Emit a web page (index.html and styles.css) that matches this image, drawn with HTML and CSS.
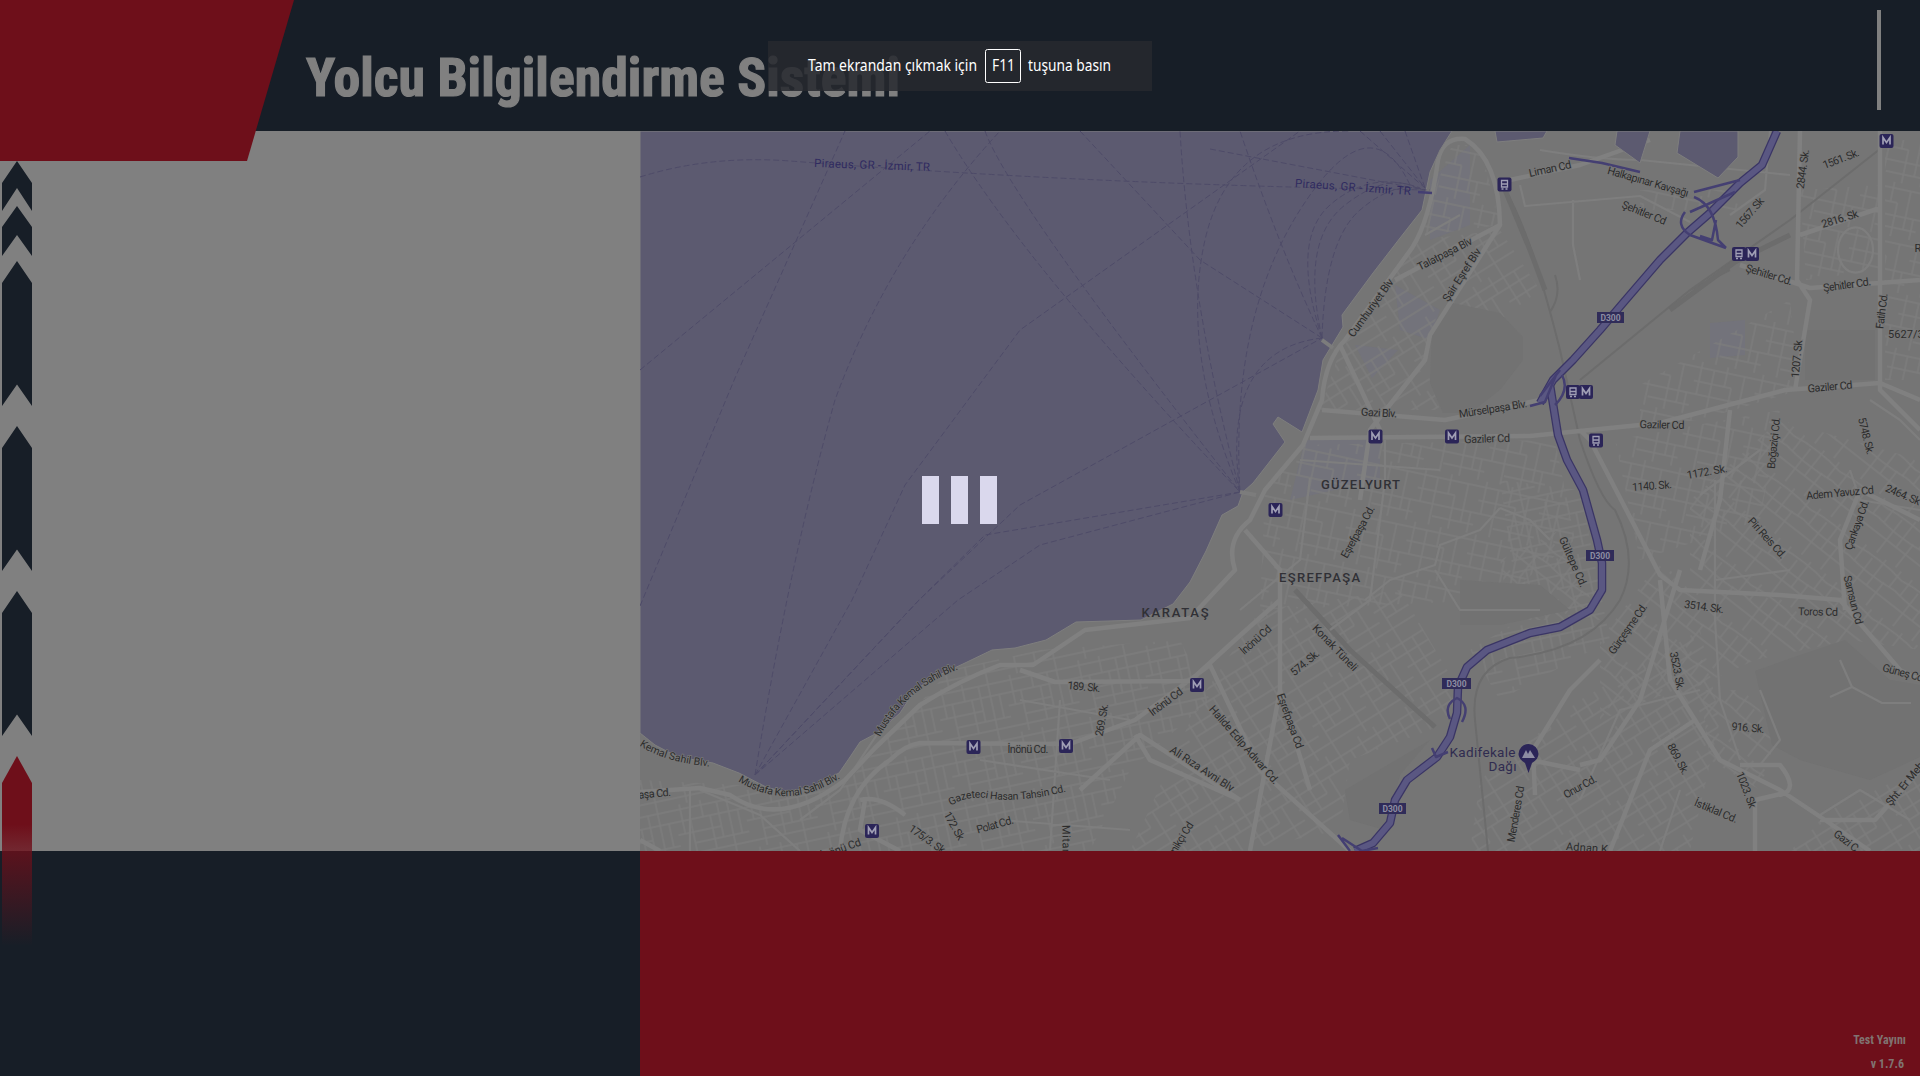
FILE: index.html
```
<!DOCTYPE html>
<html lang="tr">
<head>
<meta charset="utf-8">
<title>Yolcu Bilgilendirme Sistemi</title>
<link rel="stylesheet" href="styles.css">
</head>
<body>
<div class="screen">
  <header class="header">
    <div class="brand"></div>
    <h1 class="title"><svg width="600" height="70"><text x="1" y="53" textLength="594" lengthAdjust="spacingAndGlyphs">Yolcu Bilgilendirme Sistemi</text></svg></h1>
    <div class="divider"></div>
  </header>
  <main class="content">
    <section class="stops"></section>
    <section class="map">
      <svg viewBox="640 131 1280 720" width="1280" height="720">
        <defs>
          <pattern id="g1" width="62" height="54" patternUnits="userSpaceOnUse" patternTransform="rotate(12)"><path d="M0 6H62M0 20H38M0 33H62M20 45H62M5 0V33M18 6V54M31 0V20M38 20V54M49 6V45M57 33V54"/></pattern>
          <pattern id="g2" width="56" height="64" patternUnits="userSpaceOnUse" patternTransform="rotate(-32)"><path d="M0 8H56M0 19H56M0 32H33M8 43H56M0 55H56M8 0V64M20 8V43M33 0V32M43 19V64M51 0V19"/></pattern>
          <pattern id="g3" width="70" height="58" patternUnits="userSpaceOnUse" patternTransform="rotate(-12)"><path d="M0 5H70M0 17H70M0 30H44M15 41H70M0 51H70M7 0V30M15 17V58M28 0V17M35 17V51M44 5V41M54 0V58M63 17V41"/></pattern>
          <pattern id="g4" width="58" height="48" patternUnits="userSpaceOnUse" patternTransform="rotate(38)"><path d="M0 7Q28 2 58 7M0 19Q28 23 58 19M0 32H58M8 0V19M21 7V48M33 0V32M45 19V48M52 0V19"/></pattern>
          <path id="coastA" d="M630 738Q655 762 714 767"/>
          <path id="coastB" d="M738 781Q788 813 842 777"/>
          <path id="coastC" d="M880 737Q905 688 962 668"/>
          <path id="gaz" d="M951 806Q965 796 985 798Q1020 804 1072 790"/>
          <g id="metro"><rect x="-7" y="-7" width="14" height="14" rx="2"/><path d="M-3.5 3.5V-3.5L0 1.5L3.5-3.5V3.5"/></g>
          <g id="train"><rect x="-7" y="-7" width="14" height="14" rx="2"/><path d="M-3-4H3V2.500H-3ZM-3-.5H3M-3 4.500H-1M1 4.500H3"/></g>
        </defs>
        <rect class="land" x="640" y="131" width="1280" height="720"/>
        <g class="tint">
          <path d="M1430 180L1470 145V225L1430 240ZM1395 285L1440 310L1430 340L1400 330ZM1355 345L1398 350L1372 378ZM1305 440L1380 440V480L1290 500ZM1710 323L1745 320V355L1710 358Z"/>
        </g>
        <g class="grid">
          <path fill="url(#g1)" d="M1452 145L1480 145L1500 225L1425 235L1425 215ZM1640 190H1740V210H1640ZM1800 190L1880 185V270L1806 280ZM1885 140H1920V380H1885ZM1640 385L1790 300L1800 390L1700 420L1640 425ZM1300 445L1555 440L1575 540L1500 600L1260 610L1265 490ZM1615 440L1780 410L1760 520L1640 560Z"/>
          <path fill="url(#g2)" d="M1340 350L1420 240L1500 230L1540 290L1500 320L1440 300L1425 365L1440 410L1320 410ZM1260 610L1400 590L1465 700L1430 730L1350 760L1340 830L1240 851H1130L1200 700ZM1580 700L1700 630L1720 720L1690 851H1470L1480 780ZM1790 851L1830 810L1920 770V851Z"/>
          <path fill="url(#g3)" d="M950 670L1040 650L1180 640L1210 700L1130 770L1090 851H860L840 790L890 735ZM640 780L740 785L860 790L900 851H640ZM1500 480L1580 490L1610 640L1500 700L1470 650L1520 620Z"/>
          <path fill="url(#g4)" d="M1690 500L1780 420L1920 460V650L1850 640L1755 660L1690 690ZM1700 690H1750L1775 740L1760 790L1710 760ZM1600 640L1660 560L1700 600L1700 680L1600 720ZM1500 560L1560 530L1600 620L1510 620Z"/>
        </g>
        <g class="park">
          <path d="M1453 303L1500 313L1523 337V360L1500 390L1470 413H1443L1430 383L1432 330ZM1755 671L1800 655L1845 640L1890 680L1920 685V757L1870 780L1800 760L1772 745ZM1345 790L1430 740L1400 775L1385 830L1350 820ZM1460 580L1540 585L1570 610L1500 625L1460 625ZM1805 330H1875V380H1805Z"/>
        </g>
        <g class="rail"><path d="M1505 190Q1530 230 1560 350L1580 440Q1600 500 1615 510Q1640 560 1620 600Q1590 650 1510 658Q1470 670 1475 720L1488 851M1580 380L1690 290L1790 220L1885 145M1690 290L1730 270M1555 275Q1562 295 1550 312"/><path class="wide" d="M1505 190L1530 250L1545 290M1670 310L1735 262L1790 235M1295 590L1350 650L1435 727"/></g>
        <g class="street">
          <path d="M1425 235L1460 215M1540 150Q1600 160 1640 160L1790 175M1770 131L1765 190L1730 215M1520 185L1525 206L1640 196L1690 222M1573 200V245L1580 280M1310 478L1300 560L1240 610M1385 440V480L1370 600L1330 630M1500 508L1480 530L1440 545L1435 565L1390 580L1365 600M1500 508L1530 520L1550 540M1435 570L1460 610L1540 610M1700 495L1760 450M1580 800L1620 710L1700 690M1660 851L1680 790M1715 480V620L1720 700L1740 760M1715 580L1790 570M1840 660L1852 687L1830 697M1852 687L1882 703L1911 703M1760 690L1780 740L1760 765M1870 400L1900 420L1920 440M1850 470L1860 500L1920 510M1910 820L1860 790L1820 815M1300 460L1440 470M800 820L840 790L880 730M700 790L760 815L800 851M690 790V851M1000 820L1130 830M1020 700L1130 720M980 760L1110 780M1050 850L1060 700M1838 250A17 22 0 1 0 1873 250A17 22 0 1 0 1838 250"/>
        </g>
        <g class="road">
          <path d="M1500 225Q1499 160 1465 139Q1443 137 1438 160Q1430 220 1412 248L1345 340Q1325 360 1322 400L1303 445L1265 490L1250 520Q1225 540 1235 570L1190 618L1085 630L1033 665L1000 665Q960 680 920 705L875 748L845 780Q780 830 730 795L700 788L640 792"/>
          <path d="M1020 670L1055 682L1190 681L1235 640L1280 600M840 851Q845 790 890 760Q905 745 920 743L1070 744L1135 720L1210 665M1395 280L1500 225L1430 335L1425 360L1370 430L1360 500M1322 410L1445 420L1540 400M1310 438L1530 436L1660 423L1785 390L1880 383L1920 400M1340 345L1380 430M1245 530L1280 570V600L1280 690L1250 851M1280 690L1310 790M1210 665L1260 770L1350 851M1240 800L1140 735L1080 790M1135 735L1150 760L1240 800M1800 131L1797 280L1810 300L1795 390M1740 265L1810 288L1920 280M1880 131V390L1920 430M1800 235L1880 208M1580 430L1590 440L1660 575L1680 590L1780 595L1840 600L1900 670L1920 680M1580 765L1600 760L1640 700L1680 570M1660 580L1670 680L1695 720L1720 760L1780 790L1825 820L1870 851M1695 720L1650 750L1610 851M1740 765H1780Q1800 790 1780 795M1755 851V800L1785 793M1820 820L1875 820L1920 770M1700 570L1720 500L1730 410M1845 610L1840 540L1860 490L1880 500L1920 520M1510 180L1580 165L1650 140M1535 795L1533 750L1570 690L1600 660M640 840L660 851M860 800Q880 795 905 815M900 851L860 830L865 800M1530 760L1580 770"/>
        </g>
        <path class="sea" d="M640 131H1452L1440 150L1430 172L1422 210L1400 238L1373 273L1342 315L1343 327L1323 360L1318 390L1302 432L1278 417L1273 424L1285 442L1253 483L1243 492L1238 506L1222 515L1206 551L1190 582L1173 604L1141 620L1076 622L1046 640L1015 648L992 650L965 663L935 677L915 690L900 713L877 733L860 742L850 757L839 773L812 787L785 792L766 787L739 773L713 763L678 757L655 745L640 733ZM1495 131H1547L1543 138L1497 142ZM1617 131H1650L1640 163L1615 145ZM1680 131H1738V157L1718 178L1677 153Z"/>
        <g class="ferry">
          <path d="M640 177Q710 155 790 161Q1100 185 1430 190M640 606L735 378L845 131M755 775Q790 560 835 400Q890 250 1000 131M755 775L852 600L905 485L1020 330L1300 131M755 775L919 600L985 535L1240 492M755 775L919 600L1020 505L1322 338M755 775L958 600L1040 545L1240 492M640 370L930 131M945 131Q1020 260 1240 492M985 131Q1010 200 1240 492M1240 492Q1180 350 1205 240T1350 131M1240 492Q1190 300 1180 131M1240 492Q1230 320 1300 210T1410 185M1080 131L1200 260L1322 338M1322 338Q1290 240 1330 205T1420 188M1322 338Q1300 240 1345 205T1420 190M1322 338Q1325 240 1360 210T1425 190M1322 338Q1280 250 1240 131M1322 338Q1220 350 1240 492M1210 149L1425 190M1360 131L1425 188M1380 131L1425 188M1405 131L1425 188"/>
        </g>
        <path class="pier" d="M1322 340L1333 348M1240 492L1256 495"/>
        <g class="hw-edge"><path d="M1777 131L1762 165L1740 183L1710 213L1687 233L1660 260L1623 303L1600 330L1573 360L1553 380L1540 403M1550 385L1558 435L1567 460L1583 490L1597 540L1602 563V590L1590 610L1560 627L1530 633L1487 650L1467 667L1458 687L1457 713L1450 737L1437 757L1407 780L1395 800L1390 823L1373 843L1355 851"/></g>
        <g class="hw"><path d="M1777 131L1762 165L1740 183L1710 213L1687 233L1660 260L1623 303L1600 330L1573 360L1553 380L1540 403M1550 385L1558 435L1567 460L1583 490L1597 540L1602 563V590L1590 610L1560 627L1530 633L1487 650L1467 667L1458 687L1457 713L1450 737L1437 757L1407 780L1395 800L1390 823L1373 843L1355 851"/></g>
        <g class="ramp"><path d="M1569 158L1602 163L1640 172M1694 192L1740 180M1694 197Q1715 205 1718 240L1726 248M1690 212L1735 192M1685 212Q1675 225 1690 235L1726 248M1700 236L1712 240L1716 220M1530 406L1545 402L1556 375M1540 396L1560 370M1555 405Q1570 390 1562 375M1450 719Q1443 705 1457 698Q1471 705 1462 722M1432 748L1436 757L1448 752M1338 835L1350 851M1342 838L1362 851L1378 848M1418 192L1432 193"/></g>
        <g class="shield">
          <rect x="1597" y="312" width="27" height="11"/><rect x="1586" y="550" width="28" height="11"/><rect x="1442" y="678" width="29" height="11"/><rect x="1379" y="803" width="27" height="11"/>
          <text x="1610.500" y="321">D300</text><text x="1600" y="559">D300</text><text x="1456.500" y="687">D300</text><text x="1392.500" y="812">D300</text>
        </g>
        <g class="pin">
          <use href="#train" x="1504.500" y="184.500"/><use href="#metro" x="1375.500" y="436.500"/><use href="#metro" x="1452" y="436.500"/><use href="#train" x="1573" y="392"/><use href="#metro" x="1586" y="392"/><use href="#train" x="1596" y="440.500"/><use href="#train" x="1739" y="254"/><use href="#metro" x="1752" y="254"/><use href="#metro" x="1886.500" y="141"/><use href="#metro" x="1275.500" y="510"/><use href="#metro" x="1197" y="685"/><use href="#metro" x="973.500" y="747"/><use href="#metro" x="1066" y="746"/><use href="#metro" x="872" y="831"/>
          <path class="drop" d="M1528.500 773L1525 763Q1518.500 759 1518.500 754A10 10 0 0 1 1538.500 754Q1538.500 759 1532 763Z"/><path class="peak" d="M1522 758L1526 750L1528 754L1530 750L1535 758Z"/>
        </g>
        <g class="place">
          <text x="1321" y="488.500" textLength="79">GÜZELYURT</text><text x="1279" y="582" textLength="81">EŞREFPAŞA</text><text x="1141.500" y="617" textLength="67">KARATAŞ</text>
          <text class="poi" x="1449.500" y="757" textLength="66">Kadifekale</text><text class="poi" x="1488.500" y="770.500" textLength="28">Dağı</text>
        </g>
        <g class="sealabel"><text transform="translate(872 165) rotate(2)" textLength="116">Piraeus, GR - İzmir, TR</text><text transform="translate(1353 187) rotate(4)" textLength="116">Piraeus, GR - İzmir, TR</text></g>
        <g class="label">
          <text transform="translate(1550 169) rotate(-12)" textLength="43">Liman Cd</text>
          <text transform="translate(1648 182) rotate(16)" textLength="84">Halkapınar Kavşağı</text>
          <text transform="translate(1644 213) rotate(22)" textLength="47">Şehitler Cd</text>
          <text transform="translate(1445 254) rotate(-27)" textLength="60">Talatpaşa Blv</text>
          <text transform="translate(1462 275) rotate(-57)" textLength="61">Şair Eşref Blv</text>
          <text transform="translate(1371 308) rotate(-54)" textLength="69">Cumhuriyet Blv</text>
          <text transform="translate(1379 413) rotate(3)" textLength="36">Gazi Blv.</text>
          <text transform="translate(1493 409) rotate(-9)" textLength="69">Mürselpaşa Blv.</text>
          <text transform="translate(1487 439) rotate(-2)" textLength="46">Gaziler Cd</text>
          <text transform="translate(1841 159) rotate(-21)" textLength="38">1561. Sk.</text>
          <text transform="translate(1803 169) rotate(-82)" textLength="40">2844. Sk.</text>
          <text transform="translate(1750 213) rotate(-49)" textLength="37">1567. Sk</text>
          <text transform="translate(1840 219) rotate(-17)" textLength="38">2816. Sk</text>
          <text transform="translate(1769 275) rotate(17)" textLength="48">Şehitler Cd.</text>
          <text transform="translate(1847 285) rotate(-8)" textLength="48">Şehitler Cd.</text>
          <text transform="translate(1882 311) rotate(-83)" textLength="36">Fatih Cd.</text>
          <text transform="translate(1909 334)" textLength="42">5627/35</text>
          <text transform="translate(1918 248)">R</text>
          <text transform="translate(1797 359) rotate(-85)" textLength="38">1207. Sk</text>
          <text transform="translate(1830 387) rotate(-5)" textLength="45">Gaziler Cd</text>
          <text transform="translate(1662 425) rotate(1)" textLength="45">Gaziler Cd</text>
          <text transform="translate(1774 443) rotate(-84)" textLength="52">Boğaziçi Cd.</text>
          <text transform="translate(1866 436) rotate(76)" textLength="38">5748. Sk.</text>
          <text transform="translate(1707 472) rotate(-10)" textLength="41">1172. Sk.</text>
          <text transform="translate(1652 486) rotate(-4)" textLength="40">1140. Sk.</text>
          <text transform="translate(1840 493) rotate(-5)" textLength="68">Adem Yavuz Cd</text>
          <text transform="translate(1903 495) rotate(23)" textLength="37">2464. Sk</text>
          <text transform="translate(1857 525) rotate(-70)" textLength="52">Çankaya Cd.</text>
          <text transform="translate(1767 538) rotate(48)" textLength="51">Piri Reis Cd.</text>
          <text transform="translate(1853 600) rotate(76)" textLength="50">Samsun Cd</text>
          <text transform="translate(1818 612) rotate(1)" textLength="40">Toros Cd</text>
          <text transform="translate(1704 607) rotate(8)" textLength="40">3514. Sk.</text>
          <text transform="translate(1628 629) rotate(-55)" textLength="59">Gürçeşme Cd.</text>
          <text transform="translate(1677 671) rotate(79)" textLength="39">3523. Sk.</text>
          <text transform="translate(1903 673) rotate(15)" textLength="42">Güneş Cd</text>
          <text transform="translate(1748 728) rotate(5)" textLength="33">916. Sk.</text>
          <text transform="translate(1678 759) rotate(62)" textLength="34">869. Sk.</text>
          <text transform="translate(1746 790) rotate(69)" textLength="38">1023. Sk</text>
          <text transform="translate(1716 811) rotate(23)" textLength="46">İstiklal Cd.</text>
          <text transform="translate(1846 841) rotate(38)" textLength="28">Gazi C</text>
          <text transform="translate(1905 784) rotate(-50)" textLength="53">Şht. Er Meh</text>
          <text transform="translate(1580 787) rotate(-29)" textLength="36">Onur Cd.</text>
          <text transform="translate(1516 814) rotate(-80)" textLength="57">Menderes Cd</text>
          <text transform="translate(1587 848) rotate(4)" textLength="42">Adnan K</text>
          <text transform="translate(1573 562) rotate(66)" textLength="54">Gültepe Cd.</text>
          <text transform="translate(1358 532) rotate(-61)" textLength="58">Eşrefpaşa Cd.</text>
          <text transform="translate(1335 648) rotate(46)" textLength="60">Konak Tüneli</text>
          <text transform="translate(1305 663) rotate(-40)" textLength="34">574. Sk.</text>
          <text transform="translate(1256 640) rotate(-42)" textLength="38">İnönü Cd</text>
          <text transform="translate(1290 721) rotate(70)" textLength="58">Eşrefpaşa Cd</text>
          <text transform="translate(1244 745) rotate(49)" textLength="100">Halide Edip Adıvar Cd.</text>
          <text transform="translate(1202 769) rotate(33)" textLength="74">Ali Rıza Avni Blv</text>
          <text transform="translate(1166 702) rotate(-37)" textLength="39">İnönü Cd</text>
          <text transform="translate(1084 687) rotate(5)" textLength="33">189. Sk.</text>
          <text transform="translate(1102 720) rotate(-80)" textLength="33">269. Sk.</text>
          <text transform="translate(1028 749)" textLength="41">İnönü Cd.</text>
          <text transform="translate(995 825) rotate(-16)" textLength="38">Polat Cd.</text>
          <text transform="translate(954 826) rotate(61)" textLength="31">172. Sk</text>
          <text transform="translate(928 840) rotate(35)" textLength="44">175/3. Sk.</text>
          <text transform="translate(1066 842) rotate(89)" textLength="34">Mitara</text>
          <text transform="translate(1181 839) rotate(-58)" textLength="38">mikçi Cd</text>
          <text transform="translate(841 849) rotate(-20)" textLength="42">İnönü Cd</text>
          <text transform="translate(652 794) rotate(-5)" textLength="38">paşa Cd.</text>
        </g>
        <g class="label path">
          <text><textPath href="#coastA" textLength="86">fa Kemal Sahil Blv.</textPath></text>
          <text><textPath href="#coastB" textLength="109">Mustafa Kemal Sahil Blv.</textPath></text>
          <text><textPath href="#coastC" textLength="106">Mustafa Kemal Sahil Blv.</textPath></text>
          <text><textPath href="#gaz" textLength="118">Gazeteci Hasan Tahsin Cd.</textPath></text>
        </g>
      </svg>
    </section>
  </main>
  <footer class="footer">
    <div class="footer-left"></div>
    <div class="footer-right"><span>Test Yayını</span><span class="version">v 1.7.6</span></div>
  </footer>
  <svg class="route" width="34" height="960" viewBox="0 0 34 960">
    <defs><linearGradient id="fade" x1="0" y1="756" x2="0" y2="946" gradientUnits="userSpaceOnUse"><stop offset="0" stop-color="#6e0f1a"/><stop offset=".36" stop-color="#6e0f1a"/><stop offset="1" stop-color="#6e0f1a" stop-opacity="0"/></linearGradient></defs>
    <path d="M17 161L32 183V211L17 188L2 211V183ZM17 206L32 227V256L17 235L2 256V227ZM17 261L32 283V406L17 384.500L2 406V283ZM17 426L32 448V571L17 549.500L2 571V448ZM17 591L32 613V736L17 714.500L2 736V613Z"/>
    <path fill="url(#fade)" d="M17 756L32 783V946H2V783Z"/>
  </svg>
  <div class="loader"><i></i><i></i><i></i></div>
  <div class="toast"><svg width="384" height="50"><text x="40" y="30" textLength="169" lengthAdjust="spacingAndGlyphs">Tam ekrandan çıkmak için</text><rect x="217.500" y="8.500" width="35" height="33" rx="2"/><text x="224" y="30" textLength="23" lengthAdjust="spacingAndGlyphs">F11</text><text x="260" y="30" textLength="83" lengthAdjust="spacingAndGlyphs">tuşuna basın</text></svg></div>
</div>
</body>
</html>
```
FILE: styles.css
```
* { box-sizing: border-box; }
body { margin: 0; background: #171e27; font-family: Roboto, "Liberation Sans", sans-serif; }
.screen { position: relative; width: 1920px; height: 1076px; overflow: hidden; display: flex; flex-direction: column; }
svg { display: block; }
.header { height: 131px; flex: none; display: flex; background: #171e27; position: relative; z-index: 1; }
.brand { width: 294px; height: 161px; flex: none; background: #6e0f1a; clip-path: polygon(0 0, 100% 0, 247px 100%, 0 100%); }
.title { margin: 43px 0 0 11px; flex: 1; font-size: 54px; font-weight: 700; }
.title text { font-family: "Roboto Condensed", Roboto, sans-serif; font-stretch: 75%; fill: #808080; stroke: #808080; stroke-width: 1.2; }
.divider { width: 4px; height: 100px; margin: 10px 39px 0 0; background: #808080; }
.content { display: flex; height: 720px; flex: none; }
.stops { width: 640px; flex: none; background: #808080; }
.map { width: 1280px; overflow: hidden; }
.footer { display: flex; flex: 1; }
.footer-left { width: 640px; background: #171e27; }
.footer-right { flex: 1; background: #6e0f1a; color: #807371; display: flex; flex-direction: column; align-items: flex-end; justify-content: flex-end; padding: 0 14px 0 0; font: 700 12px/24px "Roboto Condensed", Roboto, sans-serif; font-stretch: 75%; }
.version { padding-right: 2px; }
.route { position: absolute; left: 0; top: 0; z-index: 2; fill: #171e27; }
.loader { position: absolute; left: 922px; top: 476px; display: flex; gap: 12px; }
.loader i { width: 17px; height: 48px; background: #dad8ed; }
.toast { position: absolute; left: 768px; top: 41px; z-index: 3; background: rgba(38, 41, 46, .86); font: 15.5px "Noto Sans", sans-serif; }
.toast text { fill: #fff; }
.toast rect { fill: none; stroke: #fff; }

.land { fill: #757575; }
.tint { fill: #73737b; }
pattern path { fill: none; stroke: #7d7d7d; stroke-width: 1.3; }
.park { fill: #727272; }
.street, .road, .rail, .ferry, .pier, .hw, .hw-edge, .ramp { fill: none; stroke-linejoin: round; }
.street { stroke: #7e7e7e; stroke-width: 2.2; }
.road { stroke: #808080; stroke-width: 4.5; }
.rail { stroke: #6c6c6c; stroke-width: 2; }
.rail .wide { stroke-width: 5; }
.sea { fill: #5c5a70; stroke: #7e7e7e; stroke-width: 1; }
.ferry { stroke: #4e4b68; stroke-width: 1; stroke-dasharray: 6 3; }
.pier { stroke: #7c7c7c; stroke-width: 4; }
.hw-edge { stroke: #3a3565; stroke-width: 8.5; }
.hw { stroke: #5a5782; stroke-width: 6; }
.ramp { stroke: #443f72; stroke-width: 2.5; }
.shield rect { fill: #302c59; }
.shield text { fill: #8d8ca2; font-size: 8.5px; font-weight: 700; text-anchor: middle; }
#metro rect, #train rect, .drop { fill: #2b2558; }
#metro path, #train path { fill: none; stroke: #a09fb5; stroke-width: 1.7; }
#train path { stroke-width: 1.3; }
.peak { fill: #8d8ca2; }
.place text { fill: #303035; font-size: 13px; font-weight: 500; }
.place .poi { fill: #302c50; font-size: 13.5px; font-weight: 400; stroke: #757575; stroke-width: 2; paint-order: stroke; }
.label text { fill: #2c2c2c; font-size: 11px; text-anchor: middle; dominant-baseline: central; stroke: #777; stroke-width: 1.5; paint-order: stroke; }
.label.path text { text-anchor: start; dominant-baseline: auto; font-size: 10.5px; }
.sealabel text { fill: #302b60; font-size: 11.5px; text-anchor: middle; dominant-baseline: central; }
```
